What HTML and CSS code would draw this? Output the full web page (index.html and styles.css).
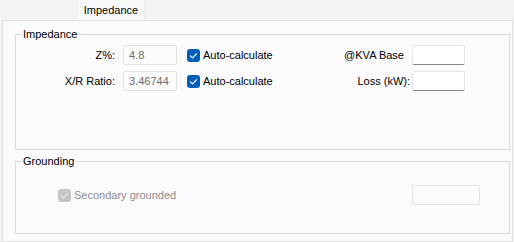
FILE: index.html
```html
<!DOCTYPE html>
<html>
<head>
<meta charset="utf-8">
<link rel="stylesheet" href="styles.css">
</head>
<body>
<div class="tabs"><div class="tab">Impedance</div></div>
<div class="panel">
  <div class="group group-imp">
    <span class="legend">Impedance</span>
    <div class="row">
      <span class="lbl">Z%:</span>
      <span class="box disabled">4.8</span>
      <label class="chk"><span class="cb"><svg viewBox="0 0 13 13" width="13" height="13"><path d="M3.2 6.6 L5.5 8.9 L9.9 4.3" fill="none" stroke="#fff" stroke-width="1.2"/></svg></span>Auto-calculate</label>
      <span class="lbl2 kva">@KVA Base</span>
      <span class="box edit"></span>
    </div>
    <div class="row">
      <span class="lbl">X/R Ratio:</span>
      <span class="box disabled">3.46744</span>
      <label class="chk"><span class="cb"><svg viewBox="0 0 13 13" width="13" height="13"><path d="M3.2 6.6 L5.5 8.9 L9.9 4.3" fill="none" stroke="#fff" stroke-width="1.2"/></svg></span>Auto-calculate</label>
      <span class="lbl2">Loss (kW):</span>
      <span class="box edit"></span>
    </div>
  </div>
  <div class="group group-gnd">
    <span class="legend">Grounding</span>
    <div class="row gnd-row">
      <label class="chk chk-disabled"><span class="cb cb-disabled"><svg viewBox="0 0 13 13" width="13" height="13"><path d="M3.2 6.6 L5.5 8.9 L9.9 4.3" fill="none" stroke="#e6e6e6" stroke-width="1.2"/></svg></span>Secondary grounded</label>
      <span class="box disabled wide"></span>
    </div>
  </div>
</div>
</body>
</html>
```
FILE: styles.css
```css
html, body {
  margin: 0;
  padding: 0;
}
body {
  width: 514px;
  height: 242px;
  overflow: hidden;
  background: #f3f3f3;
  font-family: "Liberation Sans", Arial, sans-serif;
  font-size: 11px;
  color: #000;
}
.tabs {
  display: flex;
  height: 20px;
  padding-left: 78px;
}
.tab {
  width: 67px;
  height: 20px;
  box-sizing: border-box;
  background: #f9f9fb;
  border-right: 1px solid #ececec;
  display: flex;
  align-items: center;
  justify-content: center;
}
.panel {
  width: 511px;
  height: 222px;
  margin-left: 2px;
  box-sizing: border-box;
  border: 1px solid #e3e3e3;
  background: #fbfbfd;
  padding: 13px 0 0 12px;
}
.group {
  position: relative;
  width: 495px;
  box-sizing: border-box;
  border: 1px solid #d9d9d9;
}
.group-imp {
  height: 116px;
  padding-top: 10px;
}
.group-gnd {
  height: 73px;
  margin-top: 11px;
  padding-top: 23px;
}
.legend {
  position: absolute;
  top: -8px;
  left: 6px;
  padding: 0 1px;
  background: #fbfbfd;
  line-height: 14px;
}
.row {
  display: flex;
  align-items: center;
  height: 20px;
}
.row + .row {
  margin-top: 6px;
}
.lbl {
  width: 99px;
  text-align: right;
  margin-right: 8px;
}
.box {
  box-sizing: border-box;
  width: 54px;
  height: 20px;
  border: 1px solid #e4e4e4;
  border-radius: 2px;
  background: #fbfbfb;
  color: #6d6d6d;
  padding: 0 0 0 5px;
  display: flex;
  align-items: center;
}
.box.edit {
  width: 53px;
  background: #fff;
  border-color: #e6e6e6;
  border-bottom-color: #878787;
}
.box.wide {
  width: 68px;
}
.chk {
  display: flex;
  align-items: center;
  width: 130px;
  margin-left: 10px;
}
.cb {
  width: 13px;
  height: 13px;
  border-radius: 3px;
  background: #005fb8;
  margin-right: 3px;
  display: flex;
}
.cb-disabled {
  background: #c5c5c5;
}
.chk-disabled {
  color: #8d8d8d;
  margin-left: 0;
  width: auto;
}
.lbl2 {
  width: 93px;
  text-align: right;
  margin-right: 2px;
  box-sizing: border-box;
}
.lbl2.kva {
  padding-right: 6px;
}
.gnd-row {
  justify-content: space-between;
  padding: 0 29px 0 42px;
}
```
